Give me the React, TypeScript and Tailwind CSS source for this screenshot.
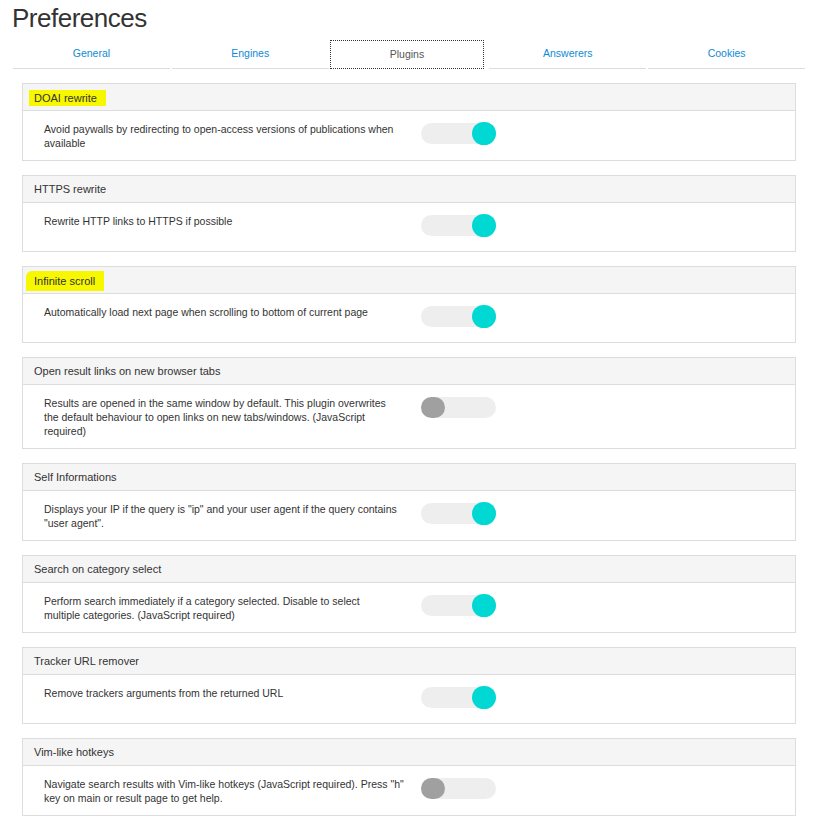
import React from 'react'

type Plugin = {
  name: string
  desc: string[]
  on: boolean
  mark?: 'a' | 'b'
}

// lines are split as in the screenshot so wrapping matches
const plugins: Plugin[] = [
  { name: 'DOAI rewrite', desc: ['Avoid paywalls by redirecting to open-access versions of publications when', 'available'], on: true, mark: 'a' },
  { name: 'HTTPS rewrite', desc: ['Rewrite HTTP links to HTTPS if possible'], on: true },
  { name: 'Infinite scroll', desc: ['Automatically load next page when scrolling to bottom of current page'], on: true, mark: 'b' },
  { name: 'Open result links on new browser tabs', desc: ['Results are opened in the same window by default. This plugin overwrites', 'the default behaviour to open links on new tabs/windows. (JavaScript', 'required)'], on: false },
  { name: 'Self Informations', desc: ['Displays your IP if the query is "ip" and your user agent if the query contains', '"user agent".'], on: true },
  { name: 'Search on category select', desc: ['Perform search immediately if a category selected. Disable to select', 'multiple categories. (JavaScript required)'], on: true },
  { name: 'Tracker URL remover', desc: ['Remove trackers arguments from the returned URL'], on: true },
  { name: 'Vim-like hotkeys', desc: ['Navigate search results with Vim-like hotkeys (JavaScript required). Press "h"', 'key on main or result page to get help.'], on: false },
]

const tabs = ['General', 'Engines', 'Plugins', 'Answerers', 'Cookies']

export default function App() {
  return (
    <div className="min-h-screen bg-white pl-[12px] pr-[24px] font-['Liberation_Sans',Arial,sans-serif] text-[#333]">
      <h1 className="pt-[5px] text-[26px] leading-[26px] tracking-[-0.5px] text-[#333] mb-[9px]">Preferences</h1>

      <div className="grid grid-cols-5 h-[29px]">
        {tabs.map((t) =>
          t === 'Plugins' ? (
            <div key={t} className="flex items-center justify-center border border-dotted border-[#333] mr-[4px] text-[10.5px] text-[#555] h-[29px]">
              {t}
            </div>
          ) : (
            <div key={t} className="flex items-center justify-center border-b border-[#ddd] mx-[1px] text-[10.5px] text-[#0e8bd6]">
              {t}
            </div>
          )
        )}
      </div>

      <div className="mx-[10px] mt-[14px] flex flex-col gap-[14px] pb-[20px]">
        {plugins.map((p) => (
          <PluginPanel key={p.name} plugin={p} />
        ))}
      </div>
    </div>
  )
}

const PluginPanel = ({ plugin }: { plugin: Plugin }) => (
  <div className="border border-[#ddd] bg-white">
    <div className="h-[27px] flex items-center bg-[#f5f5f5] border-b border-[#ddd] px-[11px] text-[11px]">
      {plugin.mark === 'a' && (
        <span className="inline-block -ml-[5px] pl-[5px] pr-[9px] leading-[16px] mt-[1px] bg-[#f7f700]">{plugin.name}</span>
      )}
      {plugin.mark === 'b' && (
        <span className="inline-block -ml-[8px] pl-[8px] pr-[9px] leading-[20px] mt-[1px] bg-[#f7f700] rounded-tl-[6px]">{plugin.name}</span>
      )}
      {!plugin.mark && <span>{plugin.name}</span>}
    </div>
    <div className="flex min-h-[48px] pl-[21px] pt-[11px] pb-[10px]">
      <p className="w-[360px] text-[10.5px] leading-[14px] text-[#333] whitespace-nowrap">
        {plugin.desc.map((line, i) => (
          <span key={i} className="block">{line}</span>
        ))}
      </p>
      <div className="ml-[17px] mt-[1px]">
        <Toggle on={plugin.on} />
      </div>
    </div>
  </div>
)

const Toggle = ({ on }: { on: boolean }) => (
  <div className="relative w-[75px] h-[21px] rounded-full bg-[#eeeeee]">
    {on ? (
      <span className="absolute right-0 -top-[1px] w-[24px] h-[23px] rounded-full bg-[#00d8d4]" />
    ) : (
      <span className="absolute left-0 top-0 w-[24px] h-[21px] rounded-full bg-[#a0a0a0]" />
    )}
  </div>
)
